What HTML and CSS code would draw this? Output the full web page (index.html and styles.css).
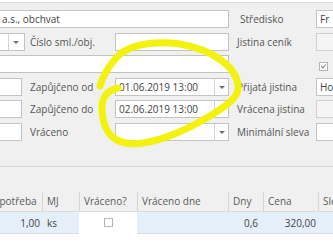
FILE: index.html
```html
<!DOCTYPE html>
<html lang="cs">

<head>
    <meta charset="UTF-8">
    <meta name="viewport" content="width=device-width, initial-scale=1">
    <title>Výpůjčka</title>
    <link rel="stylesheet" href="styles.css">
</head>

<body>
    <div class="page">
        <div class="form">
            <!-- radek 1 -->
            <div class="field wide">a.s., obchvat</div>
            <div class="label">Středisko</div>
            <div class="field right">Fr</div>

            <!-- radek 2 -->
            <div class="combo small"><span class="value"></span><span class="drop"></span></div>
            <div class="label">Číslo sml./obj.</div>
            <div class="field"></div>
            <div class="label">Jistina ceník</div>
            <div class="field right off"></div>

            <!-- radek 3 -->
            <div class="field wide"></div>
            <div class="label"></div>
            <div class="check-cell"><span class="check checked"></span></div>

            <!-- radek 4 -->
            <div class="field"></div>
            <div class="label">Zapůjčeno od</div>
            <div class="combo"><span class="value">01.06.2019 13:00</span><span class="drop"></span></div>
            <div class="label">Přijatá jistina</div>
            <div class="field right">Ho</div>

            <!-- radek 5 -->
            <div class="field"></div>
            <div class="label">Zapůjčeno do</div>
            <div class="combo"><span class="value">02.06.2019 13:00</span><span class="drop"></span></div>
            <div class="label">Vrácena jistina</div>
            <div class="field right off"></div>

            <!-- radek 6 -->
            <div class="field"></div>
            <div class="label">Vráceno</div>
            <div class="combo"><span class="value"></span><span class="drop"></span></div>
            <div class="label">Minimální sleva</div>
            <div class="field right"></div>
        </div>

        <div class="divider"></div>

        <div class="items">
            <div class="head">
                <div class="col c1">Spotřeba</div>
                <div class="col c2">MJ</div>
                <div class="col c3">Vráceno?</div>
                <div class="col c4">Vráceno dne</div>
                <div class="col c5">Dny</div>
                <div class="col c6">Cena</div>
                <div class="col c7">Sleva</div>
            </div>
            <div class="row">
                <div class="cell c1 num">1,00</div>
                <div class="cell c2">ks</div>
                <div class="cell c3 white"><span class="check"></span></div>
                <div class="cell c4"></div>
                <div class="cell c5 num">0,6</div>
                <div class="cell c6 num">320,00</div>
                <div class="cell c7"></div>
            </div>
        </div>
    </div>

    <!-- zvyrazneni fixem -->
    <svg class="marker" width="333" height="246" viewBox="0 0 333 246">
        <path d="M118,88 C108,90 101,97 102,110 C103,126 108,140 126,143 C150,147 185,131 210,116 C228,105 240,96 238,85 C236,68 215,50 180,44 C150,40 126,46 116,58 C108,67 103,76 100,86"
            fill="none" stroke="#f2f20c" stroke-width="7" stroke-linecap="round" stroke-linejoin="round" />
    </svg>
</body>

</html>
```

FILE: styles.css
```css
body {
    margin: 0;
    width: 333px;
    height: 246px;
    overflow: hidden;
    position: relative;
    font-family: 'Open Sans', sans-serif;
    font-size: 10px;
    color: #555;
    background: #fff;
}

.page {
    background: #f0f0f0;
    border-top: 1px solid #dcdcdc;
    margin-top: 2px;
}

.form {
    display: grid;
    grid-template-columns: 24px 93px 114px 87px 60px;
    grid-auto-rows: 18px;
    row-gap: 4.5px;
    margin-left: -2px;
    padding-top: 7px;
}

.field,
.combo {
    box-sizing: border-box;
    height: 18px;
    border: 1px solid #c3c3c3;
    background: #fff;
    color: #444;
    padding-left: 3px;
    line-height: 16px;
    white-space: nowrap;
    overflow: hidden;
}

.field.wide {
    grid-column: 1 / 4;
}

.field.off {
    background: #f5f5f5;
    border-color: #d0d0d0;
}

.label {
    padding-left: 8px;
    line-height: 18px;
    white-space: nowrap;
}

.form .label:nth-child(5n+4),
.form .label:nth-child(2) {
    padding-left: 11px;
}

.combo {
    display: flex;
    padding-left: 0;
}

.combo .value {
    flex: 1;
    padding-left: 3px;
}

.combo .drop {
    width: 13px;
    border-left: 1px solid #d4d4d4;
    position: relative;
}

.combo .drop::after {
    content: "";
    position: absolute;
    left: 4px;
    top: 7px;
    border-left: 3px solid transparent;
    border-right: 3px solid transparent;
    border-top: 3px solid #707070;
}

.combo.small {
    width: 27px;
}

.combo.small .drop {
    width: 15px;
}

.check-cell {
    padding-left: 3px;
    padding-top: 5px;
}

.check {
    display: inline-block;
    box-sizing: border-box;
    width: 9px;
    height: 9px;
    border: 1px solid #b5b5b5;
    background: #fff;
    position: relative;
}

.check.checked::after {
    content: "";
    position: absolute;
    left: 2px;
    top: 0px;
    width: 2px;
    height: 4px;
    border-right: 1px solid #8a8a8a;
    border-bottom: 1px solid #8a8a8a;
    transform: rotate(40deg);
}

.divider {
    margin-top: 25px;
    border-top: 1px solid #d6d6d6;
}

.items {
    padding-top: 25px;
    margin-left: -10px;
}

.head,
.row {
    display: grid;
    grid-template-columns: 52px 37px 58px 91px 35px 55px 60px;
}

.head {
    height: 19px;
    border-bottom: 1px solid #d9d9d9;
    color: #5a5a5a;
}

.head .col {
    border-left: 1px solid #d6d6d6;
    padding-left: 4px;
    line-height: 19px;
    white-space: nowrap;
}

.head .c1 {
    border-left: none;
    padding-left: 4px;
}

.row {
    height: 21px;
    background: #e4eff9;
    border-bottom: 1px solid #dcdcdc;
    color: #444;
}

.cell {
    line-height: 22px;
    white-space: nowrap;
    padding-left: 5px;
}

.cell.num {
    text-align: right;
    padding-left: 0;
    padding-right: 2px;
}

.cell.c5 {
    padding-right: 5px;
}

.cell.white {
    background: #fff;
    text-align: center;
    padding-left: 0;
}

.cell.white .check {
    vertical-align: middle;
    margin-top: -2px;
}

.marker {
    position: absolute;
    left: 0;
    top: 0;
}
```
